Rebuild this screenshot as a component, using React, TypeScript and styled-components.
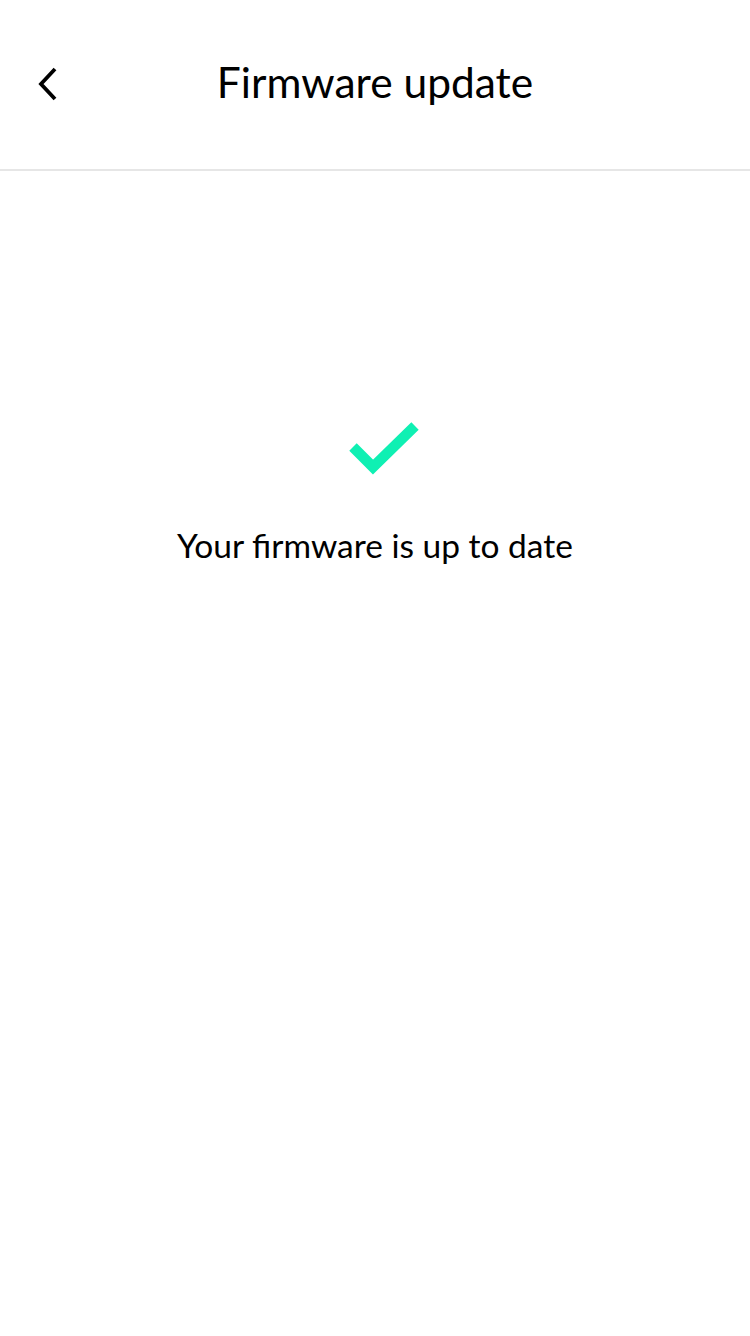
import React from "react";
import styled, { createGlobalStyle } from "styled-components";

const Global = createGlobalStyle`
  html, body { margin: 0; padding: 0; background: #ffffff; }
  body { font-family: Lato, "Noto Sans", sans-serif; color: #000; }
`;

const Page = styled.div`
  width: 750px;
  min-height: 1336px;
  display: flex;
  flex-direction: column;
  background: #fff;
`;

const Header = styled.header`
  height: 171px;
  border-bottom: 2px solid #e6e6e6;
  display: grid;
  grid-template-columns: 96px 1fr 96px;
  align-items: center;
  box-sizing: border-box;
`;

const BackButton = styled.button`
  background: none;
  border: 0;
  padding: 0 0 0 36px;
  height: 48px;
  display: flex;
  align-items: center;
  cursor: pointer;
  margin-top: -2px;
`;

const Title = styled.h1`
  margin: 0;
  text-align: center;
  font-family: Lato, sans-serif;
  font-weight: 400;
  font-size: 42.5px;
  line-height: 1;
  margin-top: -4px;
  color: #000;
`;

const Body = styled.main`
  display: flex;
  flex-direction: column;
  align-items: center;
  padding-top: 250px;
`;

const IconWrap = styled.div`
  margin-left: 18px;
  height: 54px;
`;

const Message = styled.p`
  margin: 54px 0 0;
  font-family: Lato, sans-serif;
  font-size: 33.5px;
  line-height: 1;
  color: #000;
`;

export default function App() {
  return (
    <Page>
      <Global />
      <Header>
        <BackButton aria-label="Back">
          <svg width="24" height="36" viewBox="0 0 24 36">
            <polyline points="19,3 5,18 19,33" fill="none" stroke="#000" strokeWidth="3.8" strokeLinecap="butt" strokeLinejoin="miter" />
          </svg>
        </BackButton>
        <Title>Firmware update</Title>
        <div />
      </Header>
      <Body>
        <IconWrap>
          <svg width="70" height="54" viewBox="0 0 70 54">
            <polyline points="4,26 24,46 66,5" fill="none" stroke="#0ff0b3" strokeWidth="10.5" strokeLinecap="butt" strokeLinejoin="miter" />
          </svg>
        </IconWrap>
        <Message>Your firmware is up to date</Message>
      </Body>
    </Page>
  );
}
